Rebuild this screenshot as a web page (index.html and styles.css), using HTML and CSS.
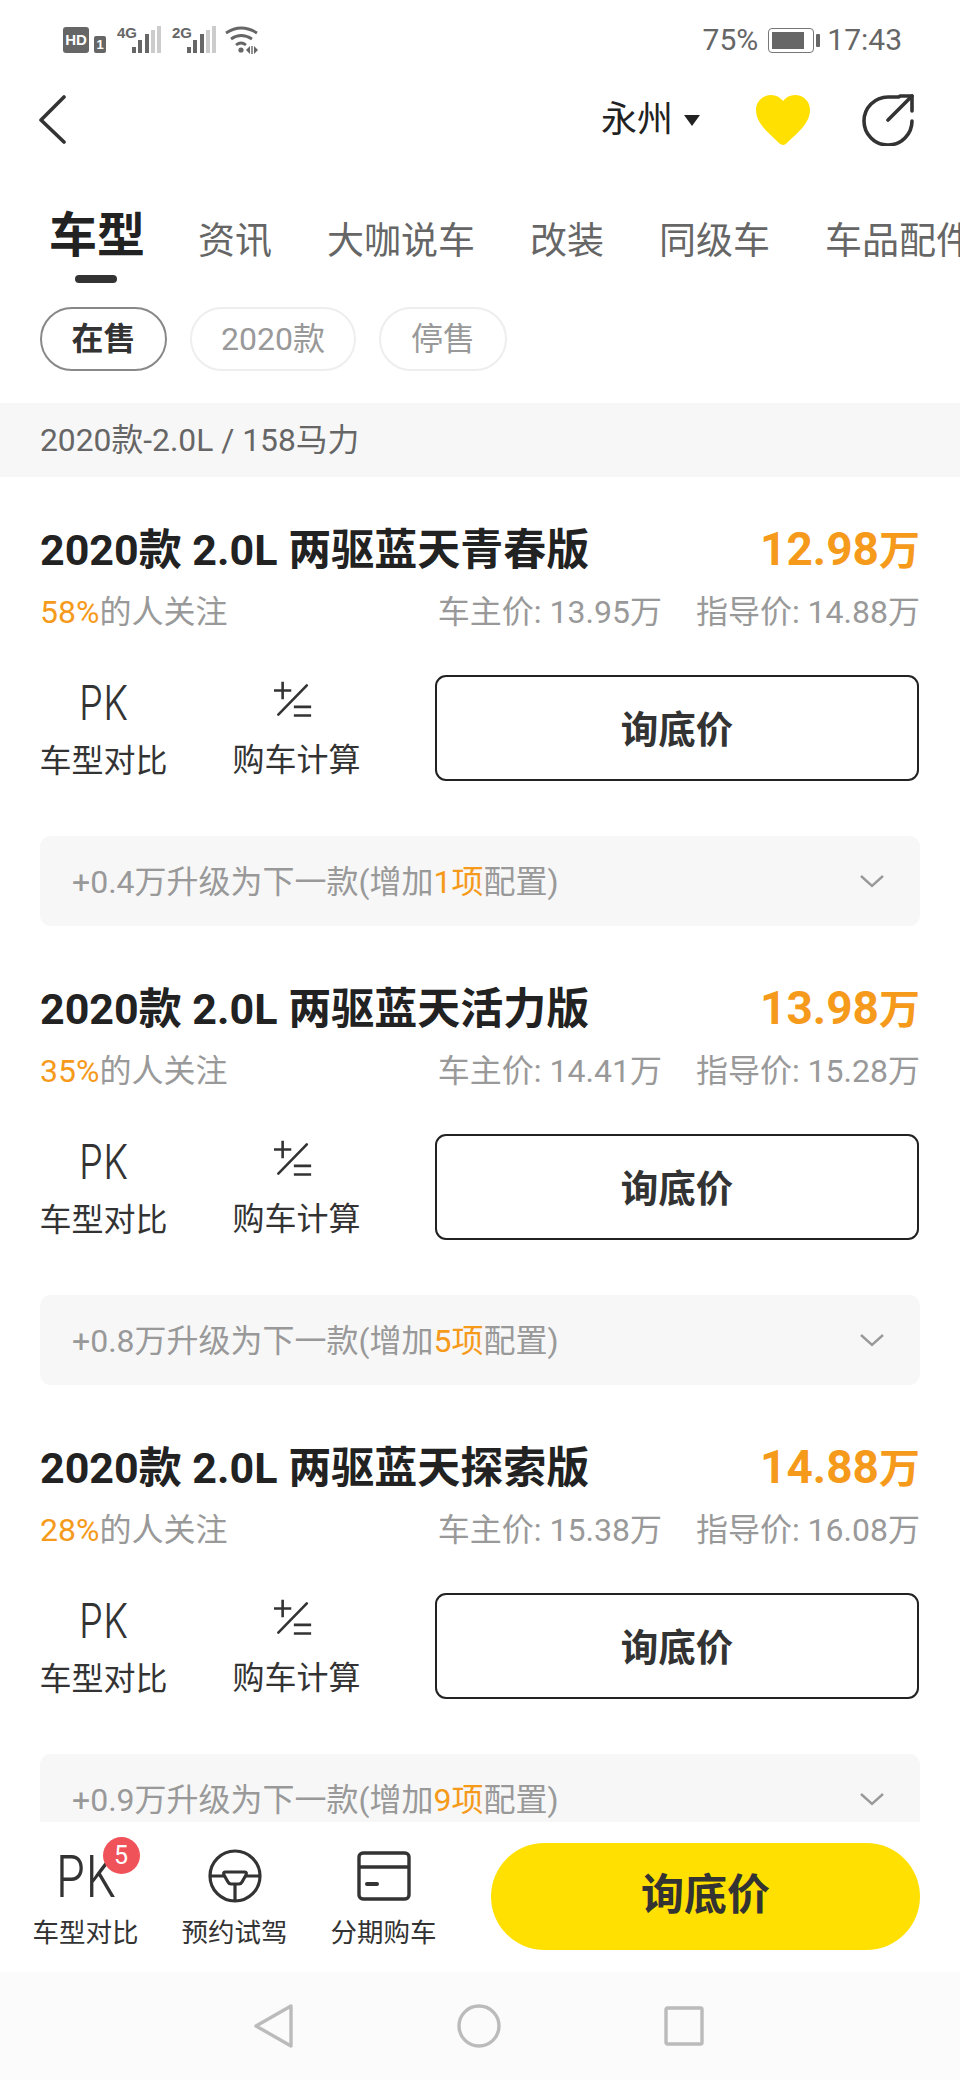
FILE: index.html
```html
<!DOCTYPE html>
<html lang="zh">

<head>
    <meta charset="utf-8">
    <title>车型</title>
    <link rel="stylesheet" href="styles.css">
</head>

<body>
    <div class="app">
        <div class="status">
            <div class="status-left">
                <span class="hd">HD</span>
                <span class="sim">1</span>
                <span class="net">4G</span>
                <svg class="bars" width="29" height="28" viewBox="0 0 29 28">
                    <rect x="0" y="21" width="4" height="6" fill="#666" />
                    <rect x="6" y="14" width="4" height="13" fill="#666" />
                    <rect x="13" y="8" width="4" height="19" fill="#666" />
                    <rect x="19" y="4" width="4" height="23" fill="#ccc" />
                    <rect x="25" y="0" width="4" height="27" fill="#ccc" />
                </svg>
                <span class="net net2">2G</span>
                <svg class="bars" width="29" height="28" viewBox="0 0 29 28">
                    <rect x="0" y="21" width="4" height="6" fill="#666" />
                    <rect x="6" y="14" width="4" height="13" fill="#666" />
                    <rect x="13" y="8" width="4" height="19" fill="#666" />
                    <rect x="19" y="4" width="4" height="23" fill="#ccc" />
                    <rect x="25" y="0" width="4" height="27" fill="#ccc" />
                </svg>
                <svg class="wifi" width="33" height="28" viewBox="0 0 33 28" fill="none" stroke="#666" stroke-width="2.8">
                    <path d="M1 7 Q16 -3 32 7" />
                    <path d="M6 13 Q16 6 27 13" />
                    <path d="M11 19 Q16 15 21 19" />
                    <circle cx="16" cy="24" r="2.6" fill="#666" stroke="none" />
                    <path d="M25 20 L21 24 L25 28 Z M29 20 L33 24 L29 28 Z" fill="#666" stroke="none" />
                    <path d="M27 20 V28" stroke-width="1.4" />
                </svg>
            </div>
            <div class="status-right">
                <span>75%</span>
                <span class="battery"><span class="battery-fill"></span></span>
                <span class="battery-tip"></span>
                <span class="clock">17:43</span>
            </div>
        </div>

        <div class="nav">
            <svg width="28" height="50" viewBox="0 0 28 50" fill="none" stroke="#333" stroke-width="3.6" stroke-linecap="round" stroke-linejoin="round">
                <path d="M25 2 L2 25 L25 47" />
            </svg>
            <div class="nav-right">
                <span class="city">永州</span>
                <span class="caret"></span>
                <svg class="heart" width="54" height="50" viewBox="0 0 54 50">
                    <path d="M27 50 Q25 50 23 48 C14 39 0 29 0 15 C0 6 7 0 15 0 C20 0 24 2 27 6 C30 2 34 0 39 0 C47 0 54 6 54 15 C54 29 40 39 31 48 Q29 50 27 50 Z" fill="#ffe000" />
                </svg>
                <svg class="share" width="52" height="52" viewBox="0 0 52 52" fill="none" stroke="#333" stroke-width="3.6" stroke-linecap="round" stroke-linejoin="round">
                    <path d="M50 27 A24 24 0 1 1 26 3 H37" />
                    <path d="M26 26 L50 2" />
                    <path d="M38 2 H50 V17" />
                </svg>
            </div>
        </div>

        <div class="tabs">
            <div class="tab tab-active">车型</div>
            <div class="tab">资讯</div>
            <div class="tab">大咖说车</div>
            <div class="tab">改装</div>
            <div class="tab">同级车</div>
            <div class="tab">车品配件</div>
        </div>

        <div class="pills">
            <div class="pill pill-active">在售</div>
            <div class="pill pill-year">2020款</div>
            <div class="pill">停售</div>
        </div>

        <div class="content">
            <div class="section">2020款-2.0L / 158马力</div>

            <div class="card">
                <div class="title-row">
                    <div class="title">2020款 2.0L 两驱蓝天青春版</div>
                    <div class="price">12.98<span class="wan">万</span></div>
                </div>
                <div class="sub-row">
                    <div class="follow"><span class="orange">58%</span>的人关注</div>
                    <div class="ref-prices">
                        <span>车主价: 13.95万</span>
                        <span>指导价: 14.88万</span>
                    </div>
                </div>
                <div class="action-row">
                    <div class="action">
                        <div class="pk">PK</div>
                        <div class="action-label">车型对比</div>
                    </div>
                    <div class="action action-calc">
                        <svg class="calc" width="48" height="46" viewBox="0 0 46 44" fill="none" stroke="#333" stroke-width="3">
                            <path d="M1 11 H21 M11 1 V21" />
                            <path d="M6 39 L39 5" stroke-linecap="round" />
                            <path d="M24 30 H44 M24 40 H44" />
                        </svg>
                        <div class="action-label">购车计算</div>
                    </div>
                    <div class="ask">询底价</div>
                </div>
                <div class="upgrade">
                    <div class="upgrade-text">+0.4万升级为下一款(增加<span class="orange">1项</span>配置)</div>
                    <svg width="24" height="14" viewBox="0 0 24 14" fill="none" stroke="#999" stroke-width="2.4">
                        <path d="M1 2 L12 12 L23 2" />
                    </svg>
                </div>
            </div>

            <div class="card">
                <div class="title-row">
                    <div class="title">2020款 2.0L 两驱蓝天活力版</div>
                    <div class="price">13.98<span class="wan">万</span></div>
                </div>
                <div class="sub-row">
                    <div class="follow"><span class="orange">35%</span>的人关注</div>
                    <div class="ref-prices">
                        <span>车主价: 14.41万</span>
                        <span>指导价: 15.28万</span>
                    </div>
                </div>
                <div class="action-row">
                    <div class="action">
                        <div class="pk">PK</div>
                        <div class="action-label">车型对比</div>
                    </div>
                    <div class="action action-calc">
                        <svg class="calc" width="48" height="46" viewBox="0 0 46 44" fill="none" stroke="#333" stroke-width="3">
                            <path d="M1 11 H21 M11 1 V21" />
                            <path d="M6 39 L39 5" stroke-linecap="round" />
                            <path d="M24 30 H44 M24 40 H44" />
                        </svg>
                        <div class="action-label">购车计算</div>
                    </div>
                    <div class="ask">询底价</div>
                </div>
                <div class="upgrade">
                    <div class="upgrade-text">+0.8万升级为下一款(增加<span class="orange">5项</span>配置)</div>
                    <svg width="24" height="14" viewBox="0 0 24 14" fill="none" stroke="#999" stroke-width="2.4">
                        <path d="M1 2 L12 12 L23 2" />
                    </svg>
                </div>
            </div>

            <div class="card">
                <div class="title-row">
                    <div class="title">2020款 2.0L 两驱蓝天探索版</div>
                    <div class="price">14.88<span class="wan">万</span></div>
                </div>
                <div class="sub-row">
                    <div class="follow"><span class="orange">28%</span>的人关注</div>
                    <div class="ref-prices">
                        <span>车主价: 15.38万</span>
                        <span>指导价: 16.08万</span>
                    </div>
                </div>
                <div class="action-row">
                    <div class="action">
                        <div class="pk">PK</div>
                        <div class="action-label">车型对比</div>
                    </div>
                    <div class="action action-calc">
                        <svg class="calc" width="48" height="46" viewBox="0 0 46 44" fill="none" stroke="#333" stroke-width="3">
                            <path d="M1 11 H21 M11 1 V21" />
                            <path d="M6 39 L39 5" stroke-linecap="round" />
                            <path d="M24 30 H44 M24 40 H44" />
                        </svg>
                        <div class="action-label">购车计算</div>
                    </div>
                    <div class="ask">询底价</div>
                </div>
                <div class="upgrade">
                    <div class="upgrade-text">+0.9万升级为下一款(增加<span class="orange">9项</span>配置)</div>
                    <svg width="24" height="14" viewBox="0 0 24 14" fill="none" stroke="#999" stroke-width="2.4">
                        <path d="M1 2 L12 12 L23 2" />
                    </svg>
                </div>
            </div>
        </div>

        <div class="bottom">
            <div class="bottom-item">
                <div class="bottom-icon">
                    <span class="pk pk-big">PK</span>
                    <span class="badge">5</span>
                </div>
                <div class="bottom-label">车型对比</div>
            </div>
            <div class="bottom-item">
                <div class="bottom-icon">
                    <svg width="54" height="54" viewBox="0 0 54 54" fill="none" stroke="#333" stroke-width="3.2" stroke-linejoin="round">
                        <circle cx="27" cy="27" r="25" />
                        <path d="M2 27 H16 M38 27 H52" />
                        <path d="M17 23 H37 Q39 23 38 26 L34 33 Q33 35 31 35 H23 Q21 35 20 33 L16 26 Q15 23 17 23 Z" />
                        <path d="M27 35 V52" />
                    </svg>
                </div>
                <div class="bottom-label">预约试驾</div>
            </div>
            <div class="bottom-item">
                <div class="bottom-icon">
                    <svg width="54" height="50" viewBox="0 0 54 50" fill="none" stroke="#333" stroke-width="3.4" stroke-linejoin="round">
                        <rect x="2" y="2" width="50" height="46" rx="4" />
                        <path d="M2 16 H52" />
                        <path d="M10 33 H20" stroke-width="4" stroke-linecap="round" />
                    </svg>
                </div>
                <div class="bottom-label">分期购车</div>
            </div>
            <div class="ask-big">询底价</div>
        </div>

        <div class="softkeys">
            <svg width="40" height="46" viewBox="0 0 40 46" fill="none" stroke="#bbb" stroke-width="3.4" stroke-linejoin="round">
                <path d="M37 3 V43 L2 23 Z" />
            </svg>
            <svg width="44" height="44" viewBox="0 0 44 44" fill="none" stroke="#bbb" stroke-width="3.4">
                <circle cx="22" cy="22" r="20" />
            </svg>
            <svg width="40" height="40" viewBox="0 0 40 40" fill="none" stroke="#bbb" stroke-width="3.4" stroke-linejoin="round">
                <rect x="2" y="2" width="36" height="36" rx="1.5" />
            </svg>
        </div>
    </div>
</body>

</html>
```

FILE: styles.css
```css
* {
    box-sizing: border-box;
}

body {
    margin: 0;
    background: #fff;
    font-family: Roboto, "Noto Sans CJK SC", sans-serif;
    color: #333;
}

.app {
    width: 960px;
    height: 2080px;
    display: flex;
    flex-direction: column;
    overflow: hidden;
}

/* status bar */
.status {
    height: 80px;
    flex: none;
    padding: 0 58px 0 63px;
    display: flex;
    justify-content: space-between;
    align-items: center;
    color: #666;
}

.status-left {
    display: flex;
    align-items: center;
}

.hd {
    width: 26px;
    height: 26px;
    background: #666;
    color: #fff;
    border-radius: 3px;
    font: bold 15px/26px "Liberation Sans", sans-serif;
    text-align: center;
}

.sim {
    width: 12px;
    height: 17px;
    margin: 9px 11px 0 5px;
    background: #666;
    color: #fff;
    border-radius: 2px;
    font: bold 13px/17px "Liberation Sans", sans-serif;
    text-align: center;
}

.net {
    width: 15px;
    margin-top: -14px;
    font: bold 15px/14px "Liberation Sans Narrow", "Liberation Sans", sans-serif;
    color: #666;
}

.net2 {
    margin-left: 11px;
}

.bars {
    display: block;
}

.wifi {
    margin-left: 9px;
}

.status-right {
    display: flex;
    align-items: center;
    font-size: 30px;
    line-height: 40px;
}

.battery {
    width: 46px;
    height: 25px;
    margin-left: 10px;
    padding: 3px;
    border: 1.5px solid #777;
    border-radius: 4px;
    display: block;
}

.battery-fill {
    display: block;
    width: 32px;
    height: 100%;
    background: #666;
}

.battery-tip {
    width: 4px;
    height: 13px;
    margin-left: 2px;
    background: #666;
    border-radius: 1px;
}

.clock {
    margin-left: 7px;
}

/* nav */
.nav {
    height: 80px;
    flex: none;
    padding: 0 46px 0 39px;
    display: flex;
    justify-content: space-between;
    align-items: center;
}

.nav-right {
    display: flex;
    align-items: center;
}

.city {
    font-size: 36px;
    line-height: 44px;
    color: #222;
}

.caret {
    width: 0;
    height: 0;
    margin-left: 11px;
    border-left: 8px solid transparent;
    border-right: 8px solid transparent;
    border-top: 11px solid #222;
}

.heart {
    margin-left: 56px;
}

.share {
    margin-left: 52px;
}

/* tabs */
.tabs {
    height: 147px;
    flex: none;
    padding: 51px 0 0 49px;
    display: flex;
    align-items: flex-start;
    gap: 55px;
    white-space: nowrap;
    overflow: hidden;
}

.tab {
    flex: none;
    margin-top: 6px;
    font-size: 37px;
    line-height: 50px;
    color: #666;
}

.tab-active {
    position: relative;
    margin-top: 0;
    margin-right: -2px;
    font-size: 48px;
    line-height: 50px;
    font-weight: 700;
    color: #222;
}

.tab-active::after {
    content: "";
    position: absolute;
    left: 26px;
    top: 64px;
    width: 42px;
    height: 8px;
    border-radius: 4px;
    background: #333;
}

/* filter pills */
.pills {
    flex: none;
    padding: 0 40px;
    display: flex;
    gap: 23px;
}

.pill {
    width: 128px;
    height: 64px;
    border: 2px solid #eee;
    border-radius: 32px;
    font-size: 32px;
    line-height: 60px;
    text-align: center;
    color: #999;
}

.pill-year {
    width: 166px;
}

.pill-active {
    width: 127px;
    border-color: #888;
    color: #333;
    font-weight: 700;
}

/* list */
.content {
    flex: 1;
    min-height: 0;
    margin-top: 32px;
    overflow: hidden;
}

.section {
    height: 74px;
    padding: 0 40px;
    background: #f7f7f7;
    font-size: 31.8px;
    line-height: 74px;
    color: #666;
}

.card {
    padding: 50px 40px 10px;
}

.title-row {
    height: 46px;
    display: flex;
    justify-content: space-between;
    align-items: center;
}

.title {
    font-size: 43px;
    line-height: 46px;
    font-weight: 700;
    color: #222;
}

.price {
    font-size: 46px;
    line-height: 46px;
    font-weight: 700;
    color: #f59a1b;
}

.wan {
    font-size: 41px;
}

.sub-row {
    height: 40px;
    margin-top: 19px;
    display: flex;
    justify-content: space-between;
    align-items: center;
    font-size: 32px;
    line-height: 40px;
    color: #999;
}

.orange {
    color: #f59a1b;
}

.ref-prices {
    display: flex;
    gap: 34px;
}

.action-row {
    height: 105px;
    margin-top: 43px;
    display: flex;
}

.action {
    width: 127px;
    display: flex;
    flex-direction: column;
    align-items: center;
}

.action-calc {
    margin-left: 66px;
}

.calc {
    display: block;
    margin-top: 6px;
    margin-right: 7px;
}

.pk {
    font-size: 48px;
    line-height: 56px;
    font-weight: 300;
    font-family: Inter, Roboto, sans-serif;
    color: #333;
    transform: scaleX(0.8);
}

.action-label {
    margin-top: 10px;
    font-size: 32px;
    line-height: 40px;
    white-space: nowrap;
    color: #333;
}

.action-calc .action-label {
    margin-top: 21px;
}

.ask {
    width: 484px;
    height: 106px;
    margin-left: 75px;
    border: 2px solid #222;
    border-radius: 11px;
    font-size: 37.5px;
    line-height: 106px;
    font-weight: 700;
    text-align: center;
    color: #333;
}

.upgrade {
    height: 90px;
    margin-top: 56px;
    padding: 0 36px 0 32px;
    background: #f7f7f7;
    border-radius: 11px;
    display: flex;
    justify-content: space-between;
    align-items: center;
    font-size: 32px;
    color: #999;
}

.upgrade-text {
    padding-bottom: 4px;
}

/* bottom bar */
.bottom {
    height: 150px;
    flex: none;
    padding: 21px 40px 21px 33px;
    background: #fff;
    display: flex;
    align-items: flex-start;
}

.bottom-item {
    width: 105px;
    margin-right: 44px;
    flex: none;
    display: flex;
    flex-direction: column;
    align-items: center;
}

.bottom-item:nth-child(3) {
    margin-right: 0;
}

.bottom-icon {
    position: relative;
    height: 62px;
    margin-top: 2px;
    display: flex;
    align-items: center;
    justify-content: center;
}

.pk-big {
    font-size: 58px;
    line-height: 62px;
    font-weight: 300;
    transform: scaleX(0.82);
}

.badge {
    position: absolute;
    left: 54px;
    top: -8px;
    width: 37px;
    height: 37px;
    border-radius: 50%;
    background: #f0525a;
    color: #fff;
    font-size: 25px;
    line-height: 37px;
    text-align: center;
}

.bottom-label {
    margin-top: 8px;
    font-size: 26.5px;
    line-height: 36px;
    white-space: nowrap;
    color: #333;
}

.ask-big {
    width: 429px;
    height: 107px;
    margin-left: auto;
    border-radius: 54px;
    background: #ffe000;
    font-size: 43px;
    line-height: 105px;
    font-weight: 700;
    text-align: center;
    color: #333;
}

/* android keys */
.softkeys {
    height: 108px;
    flex: none;
    background: #fbfbfb;
    padding: 0 256px 0 254px;
    display: flex;
    justify-content: space-between;
    align-items: center;
}
```
